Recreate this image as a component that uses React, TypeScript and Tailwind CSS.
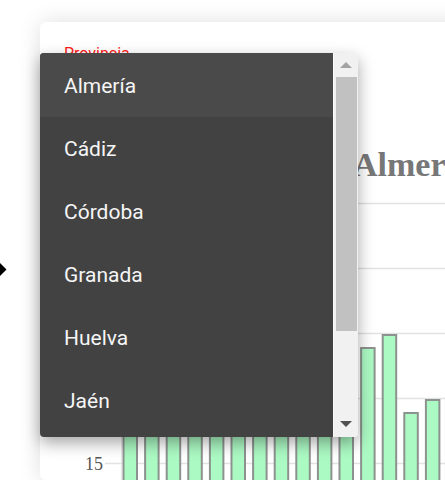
const provinces = ["Almería", "Cádiz", "Córdoba", "Granada", "Huelva", "Jaén", "Málaga", "Sevilla"];

// bar tops in page px (only the right ones show past the dropdown)
const barTops = [300, 320, 290, 310, 330, 305, 295, 315, 325, 300, 335, 347, 334, 412, 399];

function Chart() {
  const grid = [20, 85, 150, 215, 280];
  return (
    <svg width="420" height="297" className="block">
      {grid.map((y) => (
        <line key={y} x1="65" x2="420" y1={y + 0.5} y2={y + 0.5} stroke="#e2e2e2" strokeWidth="1.5" />
      ))}
      <line x1="81.5" x2="81.5" y1="0" y2="297" stroke="#e6e6e6" strokeWidth="1" />
      <text x="63" y="286.5" textAnchor="end" fontFamily="Liberation Serif, serif" fontSize="18" fill="#555">
        15
      </text>
      {barTops.map((top, i) => (
        <rect
          key={i}
          x={83.5 + i * 21.6}
          y={top - 183 + 1}
          width="13.5"
          height="320"
          fill="#abf9c3"
          stroke="#8c938e"
          strokeWidth="2"
        />
      ))}
    </svg>
  );
}

export default function App() {
  return (
    <div className="relative h-[480px] w-[445px] overflow-hidden bg-white font-['Roboto',sans-serif]">
      <div className="absolute left-[-14px] top-[261px] h-[17px] w-[17px] rotate-45 bg-black" />

      <div className="pl-[40px] pt-[22px]">
        <div className="w-[460px] rounded-md bg-white shadow-[0_0_22px_rgba(0,0,0,0.13)]">
          <div className="px-6 pt-[22px]">
            <label className="block text-[16px] leading-[20px] text-[#ff1a1a]">Provincia</label>
            <div className="h-[82px]" />
          </div>
          <h1 className="whitespace-nowrap pl-[313px] font-['Liberation_Serif',serif] text-[34px] font-bold leading-[37px] text-[#777]">
            Almería
          </h1>
          <Chart />
        </div>
      </div>

      <div className="absolute left-[40px] top-[53px] flex h-[384px] w-[318px] overflow-hidden rounded-[4px] shadow-[0_6px_16px_rgba(0,0,0,0.35)]">
        <ul className="flex-1 bg-[#424242]">
          {provinces.map((p, i) => (
            <li
              key={p}
              className={`flex items-center pl-6 pt-[3px] text-[21px] text-[#f5f5f5] ${
                i === 0 ? "h-[64px] bg-[#4a4a4a]" : "h-[63px]"
              }`}
            >
              {p}
            </li>
          ))}
        </ul>
        <div className="flex w-[25px] flex-col items-center border-l border-[#fafafa] bg-[#f1f1f1]">
          <div className="flex h-[24px] items-center justify-center">
            <div className="h-0 w-0 border-x-[6px] border-b-[6px] border-x-transparent border-b-[#a3a3a3]" />
          </div>
          <div className="h-[254px] w-[21px] bg-[#c1c1c1]" />
          <div className="flex-1" />
          <div className="flex h-[26px] items-center justify-center">
            <div className="h-0 w-0 border-x-[6px] border-t-[6px] border-x-transparent border-t-[#505050]" />
          </div>
        </div>
      </div>
    </div>
  );
}
